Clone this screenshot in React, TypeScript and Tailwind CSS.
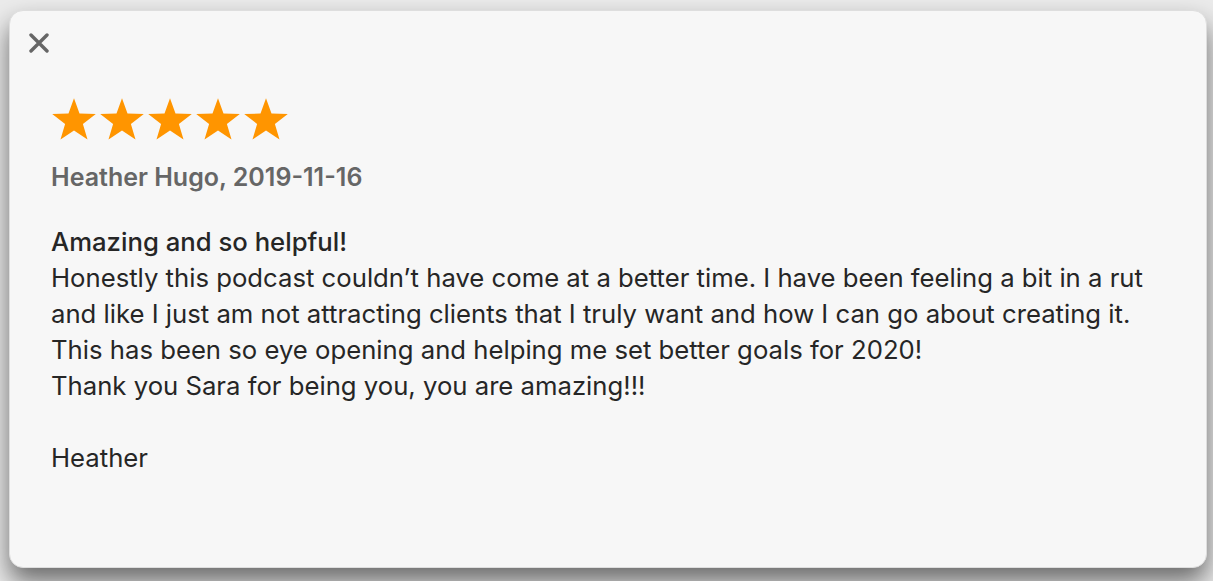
import React from "react";

function Star() {
  return (
    <svg width="48" height="46" viewBox="0 0 24 23" className="block">
      <path
        d="M12 0.6 L14.75 8.3 L22.9 8.45 L16.45 13.45 L18.75 21.3 L12 16.7 L5.25 21.3 L7.55 13.45 L1.1 8.45 L9.25 8.3 Z"
        fill="#ff9500"
      />
    </svg>
  );
}

export default function App() {
  return (
    <div
      className="w-[1213px] h-[581px] bg-[#ebebeb] overflow-hidden pt-[10px] pl-[9px]"
      style={{ fontFamily: "Inter, 'Noto Sans', sans-serif" }}
    >
      <div className="relative w-[1198px] h-[558px] bg-[#f7f7f7] rounded-[14px] border border-[#dedede] shadow-[0_14px_26px_rgba(0,0,0,0.55)] pl-[41px] pt-[86px]">
        <button className="absolute left-[17px] top-[20px] w-[24px] h-[24px] flex items-center justify-center">
          <svg width="20" height="20" viewBox="0 0 20 20">
            <path d="M2 2 L18 18 M18 2 L2 18" stroke="#666" strokeWidth="3.4" strokeLinecap="round" />
          </svg>
        </button>
        <div className="flex gap-0 -ml-[1px]">
          <Star />
          <Star />
          <Star />
          <Star />
          <Star />
        </div>
        <div className="mt-[19px] text-[25px] leading-[30px] font-semibold text-[#666]">
          Heather Hugo, 2019-11-16
        </div>
        <div className="mt-[32px] text-[25.7px] leading-[36px] text-[#262626]">
          <div className="font-medium">Amazing and so helpful!</div>
          <div>Honestly this podcast couldn’t have come at a better time. I have been feeling a bit in a rut</div>
          <div>and like I just am not attracting clients that I truly want and how I can go about creating it.</div>
          <div>This has been so eye opening and helping me set better goals for 2020!</div>
          <div>Thank you Sara for being you, you are amazing!!!</div>
          <div className="h-[36px]" />
          <div>Heather</div>
        </div>
      </div>
    </div>
  );
}
